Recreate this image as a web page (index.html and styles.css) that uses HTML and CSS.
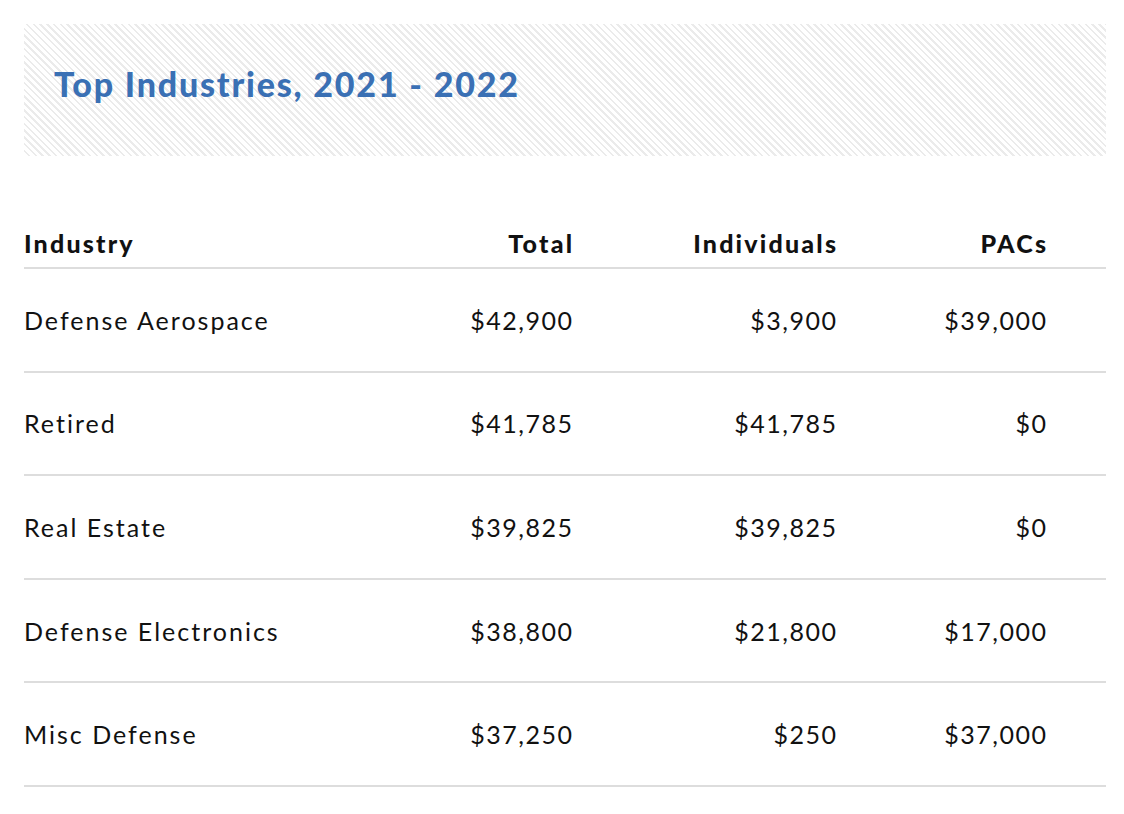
FILE: index.html
```html
<!DOCTYPE html>
<html>
<head>
<meta charset="utf-8">
<link rel="stylesheet" href="styles.css">
</head>
<body>
<div class="page">
  <div class="banner"><h2 class="title">Top Industries, 2021 - 2022</h2></div>
  <div class="table">
    <div class="row head">
      <div class="cell left">Industry</div>
      <div class="cell num">Total</div>
      <div class="cell num">Individuals</div>
      <div class="cell num">PACs</div>
    </div>
    <div class="row">
      <div class="cell left">Defense Aerospace</div>
      <div class="cell num">$42,900</div>
      <div class="cell num">$3,900</div>
      <div class="cell num">$39,000</div>
    </div>
    <div class="row">
      <div class="cell left">Retired</div>
      <div class="cell num">$41,785</div>
      <div class="cell num">$41,785</div>
      <div class="cell num">$0</div>
    </div>
    <div class="row">
      <div class="cell left">Real Estate</div>
      <div class="cell num">$39,825</div>
      <div class="cell num">$39,825</div>
      <div class="cell num">$0</div>
    </div>
    <div class="row">
      <div class="cell left">Defense Electronics</div>
      <div class="cell num">$38,800</div>
      <div class="cell num">$21,800</div>
      <div class="cell num">$17,000</div>
    </div>
    <div class="row">
      <div class="cell left">Misc Defense</div>
      <div class="cell num">$37,250</div>
      <div class="cell num">$250</div>
      <div class="cell num">$37,000</div>
    </div>
  </div>
</div>
</body>
</html>
```
FILE: styles.css
```css
html, body {
  margin: 0;
  padding: 0;
  background: #fff;
}
body {
  font-family: "Lato", "Open Sans", sans-serif;
  color: #111;
}
.page {
  padding: 24px 18px 0 24px;
}
.banner {
  height: 132px;
  box-sizing: border-box;
  padding: 0 30px;
  display: flex;
  align-items: center;
  background: repeating-linear-gradient(45deg, #ffffff 0px, #ffffff 3px, #ebebeb 3px, #ebebeb 4.8px);
}
.title {
  margin: 0;
  font-size: 34px;
  font-weight: 900;
  color: #3a70b4;
  letter-spacing: 1.8px;
  position: relative;
  top: -7px;
}
.table {
  margin-top: 70px;
}
.row {
  display: grid;
  grid-template-columns: 348px 260px 264px 210px;
  height: 101.6px;
  align-items: center;
  border-bottom: 2px solid #dddddd;
  font-size: 25px;
  line-height: 30px;
  letter-spacing: 1.5px;
}
.row.head {
  height: 39px;
  padding-top: 2px;
  align-items: start;
}
.cell.left {
  letter-spacing: 2px;
}
.cell.num {
  text-align: right;
  padding-right: 60px;
  margin-right: -1.5px;
}
.head .cell {
  font-weight: 900;
  letter-spacing: 2.2px;
}
.head .cell.num {
  margin-right: -2.2px;
}
```
